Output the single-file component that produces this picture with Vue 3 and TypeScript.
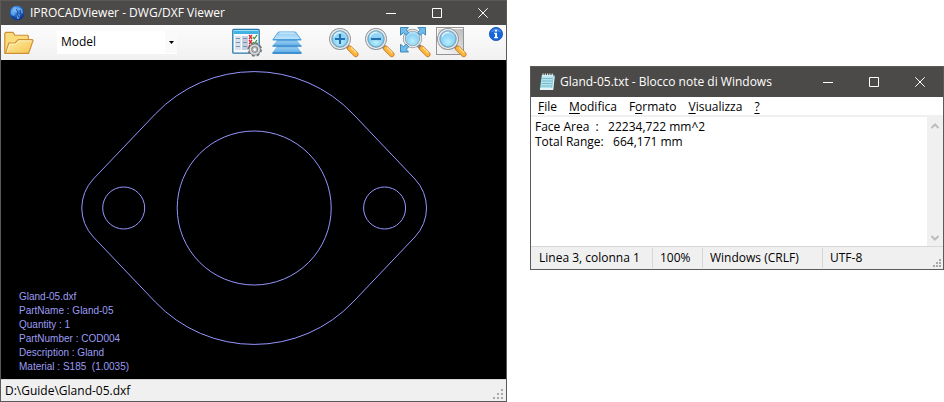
<script setup lang="ts">
import { ref } from 'vue'

interface MenuItem {
  before: string
  key: string
  after: string
}

const layout = ref('Model')
const note = ref('Face Area  :   22234,722 mm^2\nTotal Range:   664,171 mm')

const partInfo: string[] = [
  'Gland-05.dxf',
  'PartName : Gland-05',
  'Quantity : 1',
  'PartNumber : COD004',
  'Description : Gland',
  'Material : S185  (1.0035)',
]

const menu: MenuItem[] = [
  { before: '', key: 'F', after: 'ile' },
  { before: '', key: 'M', after: 'odifica' },
  { before: 'F', key: 'o', after: 'rmato' },
  { before: '', key: 'V', after: 'isualizza' },
  { before: '', key: '?', after: '' },
]

const zoomTools = ['Zoom in', 'Zoom out', 'Zoom extents', 'Zoom window'] as const
const activeTool = ref<string>('Zoom window')
</script>

<template>
  <main class="desktop">
    <section class="window viewer" aria-label="IPROCADViewer">
      <header class="titlebar">
        <svg class="globe" viewBox="0 0 16 16" aria-hidden="true">
          <defs>
            <radialGradient id="globeFill" cx=".4" cy=".3" r=".7">
              <stop offset="0" stop-color="#8fc9ff" />
              <stop offset=".45" stop-color="#2b78d8" />
              <stop offset="1" stop-color="#0a2f86" />
            </radialGradient>
          </defs>
          <circle cx="8" cy="8" r="7.3" fill="url(#globeFill)" />
          <path d="M2 6l3-4 3 1-1 3-2 1 1 3-2 1-2-2zM9 2l4 2 1 4-2 1-1-3-2-1zM8 9l3 1-1 4-2 0z" fill="#78baf6" opacity=".65" />
          <path d="M7 4l2 3-1 2 2 3M3 11l3 2M11 5l1 4" stroke="#102f70" stroke-width=".8" fill="none" />
        </svg>
        <h1>IPROCADViewer - DWG/DXF Viewer</h1>
        <div class="controls">
          <button type="button" aria-label="Minimize"><svg viewBox="0 0 10 10"><path d="M0 5.5h10" /></svg></button>
          <button type="button" aria-label="Maximize"><svg viewBox="0 0 10 10"><path d="M.5.5h9v9h-9z" /></svg></button>
          <button type="button" aria-label="Close"><svg viewBox="0 0 10 10"><path d="M.3.3l9.4 9.4M9.7.3L.3 9.7" /></svg></button>
        </div>
      </header>

      <div class="toolbar">
        <button type="button" class="tool folder" aria-label="Open file">
          <svg viewBox="0 0 31 24">
            <defs>
              <linearGradient id="folderFill" x1="0" y1="0" x2="1" y2="1">
                <stop offset="0" stop-color="#fff0a8" /><stop offset="1" stop-color="#f5c24e" />
              </linearGradient>
            </defs>
            <path d="M.8 22.5V2.2L1.8 1h7.5l2 3h13l.9 1v3.5L20 22.8z" fill="#fbdc7c" stroke="#cf8f36" stroke-width="1.2" />
            <path d="M1.5 22.8L5 12h6.5l3.3-3.5h14.4l.8 1-4.6 13.3z" fill="url(#folderFill)" stroke="#cf8f36" stroke-width="1.2" />
            <path d="M3 21.5l3-8.2h6l3.4-3.5h13" fill="none" stroke="#fff6cb" stroke-width=".8" />
          </svg>
        </button>
        <div class="combo">
          <select v-model="layout" aria-label="Layout">
            <option>Model</option>
          </select>
          <span class="drop"><svg viewBox="0 0 5 3"><path d="M0 0h5L2.5 3z" /></svg></span>
        </div>
        <div class="group wide">
          <button type="button" class="tool" aria-label="Properties">
            <svg viewBox="0 0 30 30">
              <rect x=".8" y="2.4" width="26.4" height="23.8" rx="1" fill="#f8fbfd" stroke="#2679ac" stroke-width="1.3" />
              <path d="M1.5 3h25v4h-25z" fill="#42b2e0" /><path d="M2 3.5h24" stroke="#9ce1fa" />
              <path d="M3 9h6v14H3z" fill="#dce2e9" /><path d="M10 9h6v14h-6z" fill="#c3cede" />
              <path d="M4 11.5h4M4 15.5h4M4 19.5h4M11 11.5h4M11 15.5h4M11 19.5h4" stroke="#7792b5" />
              <path d="M17 8l3 4m0-4l-3 4M17 13l3 4m0-4l-3 4M17 18l3 4m0-4l-3 4" stroke="#e2262b" stroke-width="1.3" />
              <path d="M21 10l1.3 1.8L25 8M21 15l1.3 1.8L25 13" fill="none" stroke="#26952e" stroke-width="1.2" />
              <circle cx="22.7" cy="22.500" r="6.3" fill="none" stroke="#75797c" stroke-width="2" stroke-dasharray="2.6 2.35" />
              <circle cx="22.7" cy="22.500" r="4.3" fill="none" stroke="#6d7175" stroke-width="3.6" />
              <circle cx="22.7" cy="22.500" r="4.3" fill="none" stroke="#d9dbdd" stroke-width="2" />
              <circle cx="22.7" cy="22.500" r="2" fill="#fafafa" stroke="#7e8285" stroke-width=".7" />
            </svg>
          </button>
          <button type="button" class="tool" aria-label="Layers">
            <svg viewBox="0 0 30 30">
              <defs>
                <linearGradient id="layerFill" x1="0" y1="0" x2="0" y2="1">
                  <stop offset="0" stop-color="#4b9bdc" /><stop offset=".35" stop-color="#8ec8f0" /><stop offset="1" stop-color="#5dade5" />
                </linearGradient>
                <linearGradient id="layerTop" x1="0" y1="0" x2="0" y2="1">
                  <stop offset="0" stop-color="#8fcbf2" /><stop offset="1" stop-color="#c3e6fb" />
                </linearGradient>
              </defs>
              <path d="M5.500 18.500h19l5 7H.5z" fill="url(#layerFill)" />
              <path d="M.5 25h29v2H.5z" fill="#3f8fd0" />
              <path d="M6 18.300h18" stroke="#e4f4fe" />
              <path d="M5.500 12.500h19l5 6.500H.5z" fill="url(#layerFill)" />
              <path d="M.5 18.300h29v1.500H.5z" fill="#3f8fd0" />
              <path d="M6.500 5h17l5.500 7.500H1z" fill="url(#layerTop)" stroke="#55a5df" />
              <path d="M.8 12h28.400v1.500H.8z" fill="#4a9bd9" />
              <path d="M2.500 21.200l-2 2.800M27.500 21.200l2 2.800M2.500 15l-2 2.500M27.500 15l2 2.500" stroke="#f5fbff" stroke-width="1" />
              <path d="M7.500 6h15" stroke="#e9f7ff" />
            </svg>
          </button>
        </div>
        <div class="group zooms">
          <button
            v-for="name in zoomTools"
            :key="name"
            type="button"
            class="tool"
            :aria-label="name"
            :aria-pressed="activeTool === name"
            @click="activeTool = name"
          >
            <svg viewBox="0 0 30 30">
              <defs>
                <radialGradient id="lensFill" cx=".5" cy=".65" r=".65">
                  <stop offset="0" stop-color="#b9f0fc" /><stop offset=".55" stop-color="#8cd1f5" /><stop offset="1" stop-color="#d8effb" />
                </radialGradient>
                <linearGradient id="pressedFill" x1="0" y1="1" x2="1" y2="0">
                  <stop offset=".2" stop-color="#f2f2f2" /><stop offset="1" stop-color="#bdbdbd" />
                </linearGradient>
              </defs>
              <g v-if="activeTool === name">
                <rect x="1" y="2" width="25" height="25" fill="url(#pressedFill)" />
                <rect x="-.5" y=".5" width="27" height="27" fill="none" stroke="#333" stroke-dasharray="1 1" />
              </g>
              <path d="M17 18l3.800 3.800" stroke="#85898c" stroke-width="4" />
              <path d="M20.800 21.300l6 6" stroke="#c47d2e" stroke-width="5.400" stroke-linecap="round" />
              <path d="M20.800 21.300l6 6" stroke="#ffb437" stroke-width="3.800" stroke-linecap="round" />
              <path d="M21.800 20.500l5.500 5.500" stroke="#ffe08c" stroke-width="1.200" />
              <g v-if="name === 'Zoom extents'">
                <circle cx="11.500" cy="11.500" r="8.300" fill="url(#lensFill)" stroke="#888f94" stroke-width="2.800" />
                <circle cx="11.500" cy="11.500" r="8.300" fill="none" stroke="#e4e9eb" stroke-width="1.400" />
                <g fill="#6fbcec" stroke="#347fb2" stroke-width=".9">
                  <path d="M-.5.500h8L5.200 3l2.600 2.600-2.700 2.700L2.500 5.700l-3 2.500z" />
                  <path d="M24.500.500v7.700L22 5.700l-2.600 2.600-2.700-2.700L19.300 3 16.800.500z" />
                  <path d="M-.5 25v-7.700l3 2.400 2.600-2.600 2.700 2.700-2.600 2.600L7.500 25z" />
                </g>
              </g>
              <g v-else>
                <circle cx="11" cy="12" r="9.400" fill="url(#lensFill)" stroke="#888f94" stroke-width="3" />
                <circle cx="11" cy="12" r="9.400" fill="none" stroke="#e4e9eb" stroke-width="1.500" />
                <circle cx="11" cy="12" r="7.700" fill="none" stroke="#5caddb" stroke-width=".8" />
                <path d="M5 9.700Q7 5.200 12 5.200" stroke="#f1fbff" fill="none" stroke-width="1.200" opacity=".8" />
              </g>
              <path v-if="name === 'Zoom in'" d="M6 12h10M11 7v10" stroke="#2572b2" stroke-width="2.200" />
              <path v-if="name === 'Zoom out'" d="M6 12h10" stroke="#2572b2" stroke-width="2.200" />
            </svg>
          </button>
        </div>
        <button type="button" class="info" aria-label="About">
          <svg viewBox="0 0 14 14">
            <circle cx="7" cy="7" r="6.6" fill="#1767dc" stroke="#1550b1" stroke-width=".8" />
            <path d="M2 5.5A5.2 5.2 0 0 1 12 5.5Q7 3.2 2 5.5z" fill="#69a6f6" opacity=".65" />
            <path d="M6 2.7h2v1.8H6zM5.2 5.8H8v4.3h1v1.2H5.1v-1.2h1V7h-.9z" fill="#fff" />
          </svg>
        </button>
      </div>

      <div class="canvas">
        <svg class="drawing" viewBox="0 0 505 319" role="img" aria-label="Gland outline">
          <path d="M154.3 54A136.5 136.5 0 0 1 352.1 54L413.9 119A42 42 0 0 1 413.9 177L352.1 242A136.5 136.5 0 0 1 154.3 242L92.4 177A42 42 0 0 1 92.4 119Z" />
          <circle cx="253.2" cy="148" r="77" />
          <circle cx="122.7" cy="148" r="21" />
          <circle cx="383.6" cy="148" r="21" />
        </svg>
        <ul class="part">
          <li v-for="line in partInfo" :key="line">{{ line }}</li>
        </ul>
      </div>

      <footer class="pathbar">
        <span>D:\Guide\Gland-05.dxf</span>
        <svg class="grip" viewBox="0 0 11 11" aria-hidden="true"><path d="M8 0h2v2H8zM4 4h2v2H4zM8 4h2v2H8zM0 8h2v2H0zM4 8h2v2H4zM8 8h2v2H8z" /></svg>
      </footer>
    </section>

    <section class="window notepad" aria-label="Gland-05.txt">
      <header class="titlebar">
        <svg class="pad" viewBox="0 0 16 18" aria-hidden="true">
          <path d="M3 2h12.5L14 16.5H1z" fill="#8bc9dc" stroke="#437f91" stroke-width=".7" />
          <path d="M3 2h11L12 15H1.3z" fill="#b6e4ed" />
          <path d="M3.2 5.5h10M3 8h10M2.7 10.5h10M2.3 13h10" stroke="#5ba9bd" stroke-width=".7" />
          <path d="M1 15h12.2l1.5-12 1 .5L14.2 17H1z" fill="#e5f5f7" />
          <path d="M4 .5v3M6.3.5v3M8.6.5v3M10.9.5v3M13.2.5v3" stroke="#f4f7f7" />
        </svg>
        <h2>Gland-05.txt - Blocco note di Windows</h2>
        <div class="controls">
          <button type="button" aria-label="Minimize"><svg viewBox="0 0 10 10"><path d="M0 5.5h10" /></svg></button>
          <button type="button" aria-label="Maximize"><svg viewBox="0 0 10 10"><path d="M.5.5h9v9h-9z" /></svg></button>
          <button type="button" aria-label="Close"><svg viewBox="0 0 10 10"><path d="M.3.3l9.4 9.4M9.7.3L.3 9.7" /></svg></button>
        </div>
      </header>
      <nav class="menu">
        <button v-for="item in menu" :key="item.key" type="button">{{ item.before }}<u>{{ item.key }}</u>{{ item.after }}</button>
      </nav>
      <div class="editor">
        <textarea v-model="note" aria-label="Text" spellcheck="false" wrap="off"></textarea>
        <div class="scroll">
          <button type="button" aria-label="Scroll up"><svg viewBox="0 0 8 6"><path d="M.5 5L4 1.5 7.5 5" /></svg></button>
          <button type="button" aria-label="Scroll down"><svg viewBox="0 0 8 6"><path d="M.5 1L4 4.5 7.5 1" /></svg></button>
        </div>
      </div>
      <footer class="status">
        <span>Linea 3, colonna 1</span>
        <span>100%</span>
        <span>Windows (CRLF)</span>
        <span>UTF-8</span>
        <svg class="grip" viewBox="0 0 11 11" aria-hidden="true"><path d="M8 2h2v2H8zM5 5h2v2H5zM8 5h2v2H8zM2 8h2v2H2zM5 8h2v2H5zM8 8h2v2H8z" /></svg>
      </footer>
    </section>
  </main>
</template>

<style>
body {
  margin: 0;
  background: #fff;
}
</style>

<style scoped>
* {
  box-sizing: border-box;
}
.desktop {
  display: grid;
  grid-template-columns: 507fr 414fr;
  gap: 23px;
  align-items: start;
  font: 12px/16px "Segoe UI", "Open Sans", "Noto Sans", sans-serif;
  color: #000;
}
button,
select,
textarea {
  font: inherit;
  color: inherit;
  border: 0;
  padding: 0;
  margin: 0;
  background: none;
}
svg {
  display: block;
}
.window {
  display: flex;
  flex-direction: column;
  min-width: 0;
  border: 1px solid #5b5a58;
  background: #fff;
}
.titlebar {
  display: flex;
  align-items: center;
  height: 24px;
  padding-left: 8px;
  background: #4c4a48;
  color: #fff;
}
.titlebar h1,
.titlebar h2 {
  flex: 1;
  margin: 0;
  font: inherit;
  white-space: nowrap;
}
.globe {
  width: 16px;
  height: 16px;
  margin-right: 5px;
}
.pad {
  width: 16px;
  height: 18px;
  margin-right: 5px;
}
.controls {
  display: flex;
  align-self: stretch;
}
.controls button {
  display: grid;
  place-items: center;
  width: 46px;
}
.controls svg {
  width: 10px;
  height: 10px;
  fill: none;
  stroke: #fff;
}
.toolbar {
  display: flex;
  align-items: flex-start;
  height: 35px;
  padding: 2px 3px;
  background: linear-gradient(#fcfcfc, #f1f1f1);
}
.tool {
  width: 30px;
  height: 30px;
}
.tool svg {
  width: 30px;
  height: 30px;
  overflow: visible;
}
.folder {
  display: grid;
  place-items: center;
  align-self: center;
}
.folder svg {
  height: 24px;
}
.combo {
  display: flex;
  align-self: center;
  width: 120px;
  height: 23px;
  margin: 0 auto 0 23px;
  padding-bottom: 1px;
  background: #fff;
}
.combo select {
  flex: 1;
  min-width: 0;
  padding-left: 4px;
  appearance: none;
  outline: 0;
}
.drop {
  display: grid;
  place-items: center;
  width: 12px;
  background: #fafafa;
}
.drop svg {
  width: 5px;
  height: 3px;
}
.group {
  display: flex;
}
.wide {
  gap: 10px;
  margin-right: 27px;
}
.zooms {
  gap: 6px;
  margin-right: 22px;
}
.info,
.info svg {
  width: 14px;
  height: 14px;
}
.canvas {
  position: relative;
  background: #000;
}
.drawing {
  width: 100%;
  fill: none;
  stroke: #9696ff;
  stroke-width: 1;
}
.part {
  position: absolute;
  left: 18px;
  bottom: 5px;
  margin: 0;
  padding: 0;
  list-style: none;
  font: 10px/14px "Liberation Sans", Arial, sans-serif;
  color: #9c9cf4;
  white-space: pre;
}
.pathbar {
  display: flex;
  align-items: center;
  justify-content: space-between;
  height: 22px;
  padding-left: 4px;
  border-top: 1px solid #d7d7d7;
  background: #f0f0f0;
}
.grip {
  align-self: flex-end;
  width: 11px;
  height: 11px;
  margin: 0 2px 1px auto;
  fill: #a9a9a9;
}
.notepad {
  margin-top: 66px;
}
.notepad .titlebar {
  height: 30px;
}
.menu {
  display: flex;
  gap: 12px;
  height: 20px;
  padding: 1px 0 0 7px;
  border-bottom: 2px solid #f0f0f0;
}
.menu u {
  text-underline-offset: 2px;
}
.editor {
  display: flex;
  height: 129px;
}
.editor textarea {
  flex: 1;
  min-width: 0;
  padding: 2px 4px;
  line-height: 15px;
  resize: none;
  outline: 0;
  overflow: hidden;
  white-space: pre;
}
.scroll {
  display: flex;
  flex-direction: column;
  justify-content: space-between;
  width: 16px;
  background: #f0f0f0;
}
.scroll button {
  display: grid;
  place-items: center;
  height: 17px;
}
.scroll svg {
  width: 8px;
  height: 6px;
  fill: none;
  stroke: #bdbdbd;
  stroke-width: 2;
}
.status {
  display: grid;
  grid-template-columns: 121px 50px 120px 1fr auto;
  align-items: center;
  height: 23px;
  border-top: 1px solid #d7d7d7;
  background: #f0f0f0;
  white-space: nowrap;
}
.status span {
  padding: 2px 0 2px 8px;
}
.status span + span {
  padding-left: 7px;
  border-left: 1px solid #d7d7d7;
}
.status .grip {
  margin-right: 1px;
}
</style>
